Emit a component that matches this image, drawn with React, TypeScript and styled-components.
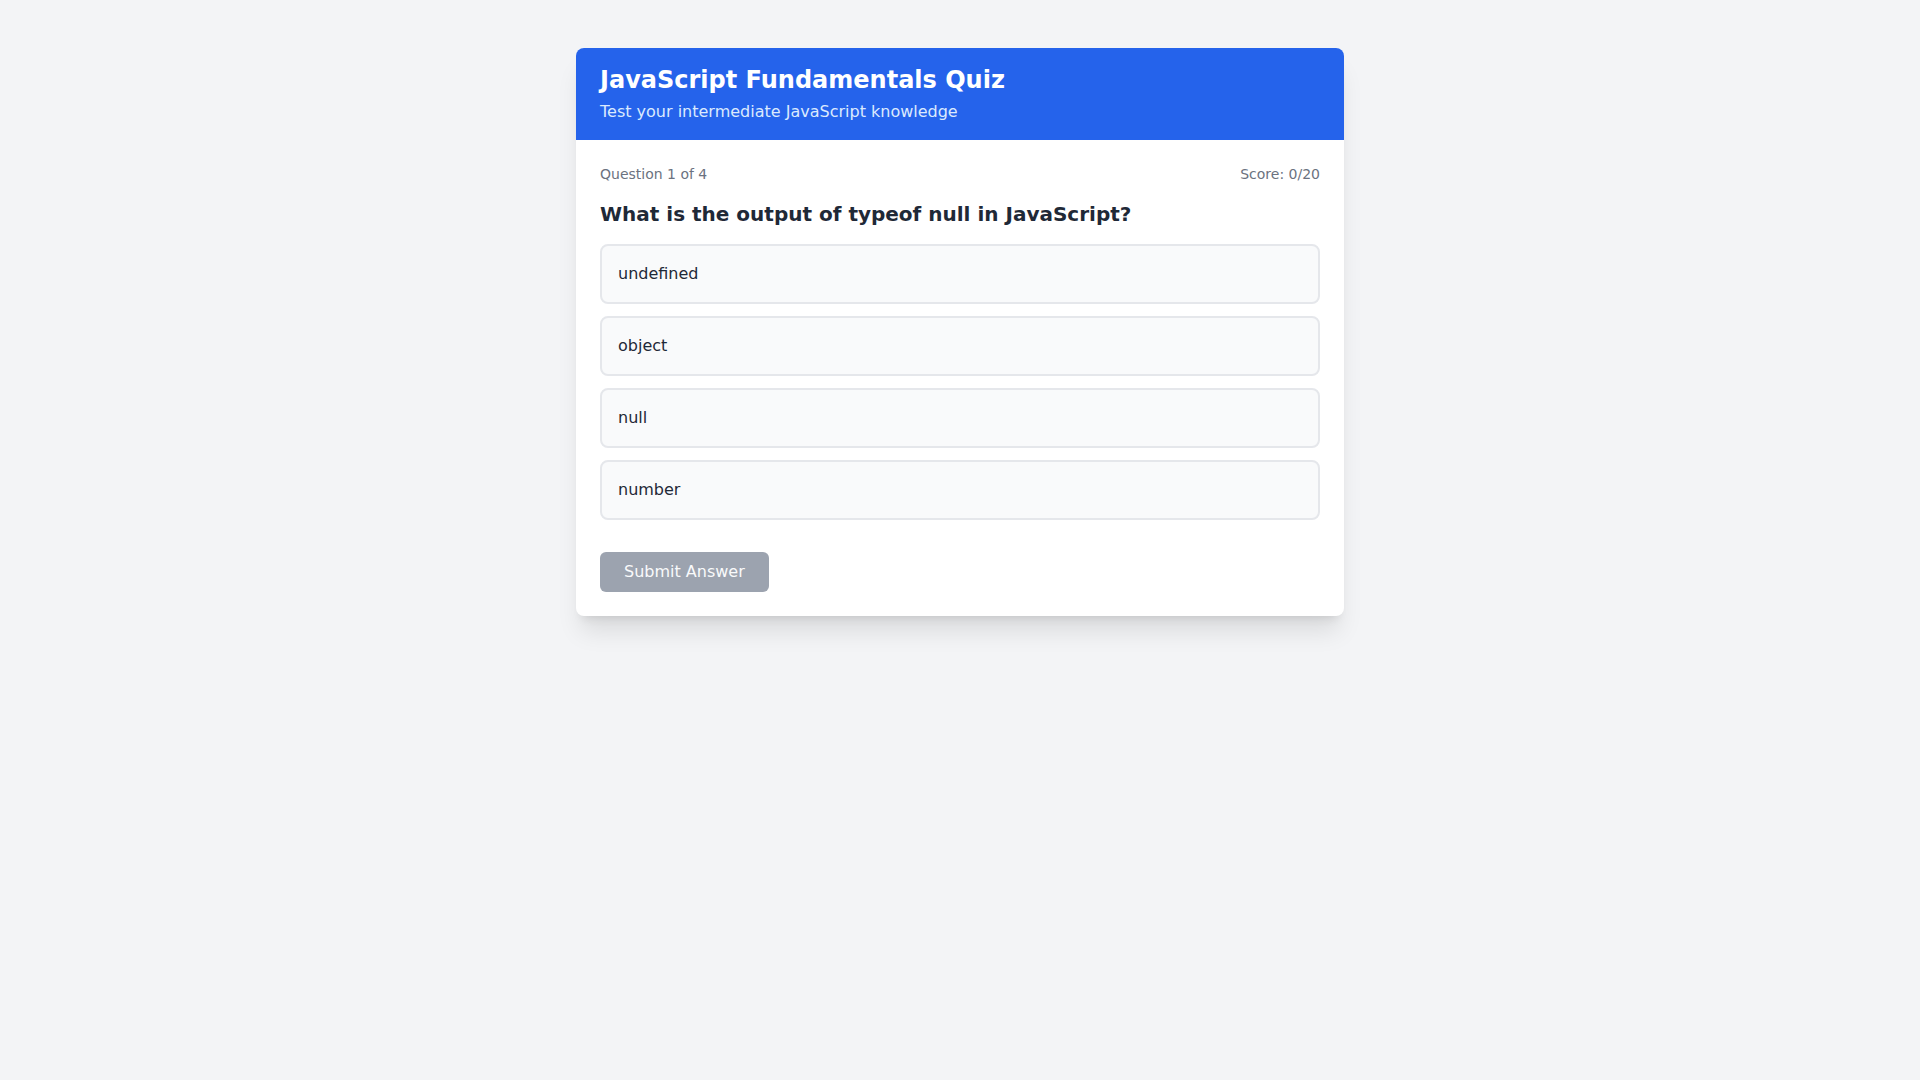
import React, { useState } from "react";
import styled, { createGlobalStyle } from "styled-components";

const GlobalStyle = createGlobalStyle`
    html, body {
        margin: 0;
        padding: 0;
        background: #f3f4f6;
        font-family: "DejaVu Sans", "Noto Sans", sans-serif;
    }
    * {
        box-sizing: border-box;
    }
`;

const Page = styled.div`
    min-height: 100vh;
    padding: 48px 16px;
`;

const Card = styled.div`
    max-width: 768px;
    margin: 0 auto;
    background: #ffffff;
    border-radius: 8px;
    overflow: hidden;
    box-shadow: 0 20px 25px -5px rgba(0, 0, 0, 0.1), 0 8px 10px -6px rgba(0, 0, 0, 0.1);
`;

const Header = styled.div`
    background: #2563eb;
    padding: 16px 24px;
    color: #ffffff;
`;

const Title = styled.h1`
    margin: 0;
    font-size: 24px;
    line-height: 32px;
    font-weight: 700;
`;

const Subtitle = styled.p`
    margin: 4px 0 0;
    font-size: 16px;
    line-height: 24px;
    color: #dbeafe;
`;

const Body = styled.div`
    padding: 24px;
`;

const MetaRow = styled.div`
    display: flex;
    justify-content: space-between;
    margin-bottom: 16px;
    font-size: 14px;
    line-height: 20px;
    color: #6b7280;
`;

const Question = styled.h2`
    margin: 0 0 16px;
    font-size: 20px;
    line-height: 28px;
    font-weight: 700;
    color: #1f2937;
`;

const OptionList = styled.div`
    display: flex;
    flex-direction: column;
    gap: 12px;
    margin-bottom: 32px;
`;

const Option = styled.button<{ $selected: boolean }>`
    display: block;
    width: 100%;
    padding: 16px;
    text-align: left;
    font-family: inherit;
    font-size: 16px;
    line-height: 24px;
    color: #1f2937;
    background: ${(p) => (p.$selected ? "#eff6ff" : "#f9fafb")};
    border: 2px solid ${(p) => (p.$selected ? "#3b82f6" : "#e5e7eb")};
    border-radius: 8px;
    cursor: pointer;
`;

const SubmitButton = styled.button`
    padding: 8px 24px;
    font-family: inherit;
    font-size: 16px;
    line-height: 24px;
    color: #f9fafb;
    background: ${(p) => (p.disabled ? "#9ca3af" : "#2563eb")};
    border: none;
    border-radius: 6px;
    cursor: ${(p) => (p.disabled ? "not-allowed" : "pointer")};
`;

const options = ["undefined", "object", "null", "number"];

const App = () => {
    const [selected, setSelected] = useState<number | null>(null);

    return (
        <Page>
            <GlobalStyle />
            <Card>
                <Header>
                    <Title>JavaScript Fundamentals Quiz</Title>
                    <Subtitle>Test your intermediate JavaScript knowledge</Subtitle>
                </Header>
                <Body>
                    <MetaRow>
                        <span>Question 1 of 4</span>
                        <span>Score: 0/20</span>
                    </MetaRow>
                    <Question>What is the output of typeof null in JavaScript?</Question>
                    <OptionList>
                        {options.map((o, i) => (
                            <Option key={o} $selected={selected === i} onClick={() => setSelected(i)}>
                                {o}
                            </Option>
                        ))}
                    </OptionList>
                    <SubmitButton disabled={selected === null}>Submit Answer</SubmitButton>
                </Body>
            </Card>
        </Page>
    );
};

export default App;
